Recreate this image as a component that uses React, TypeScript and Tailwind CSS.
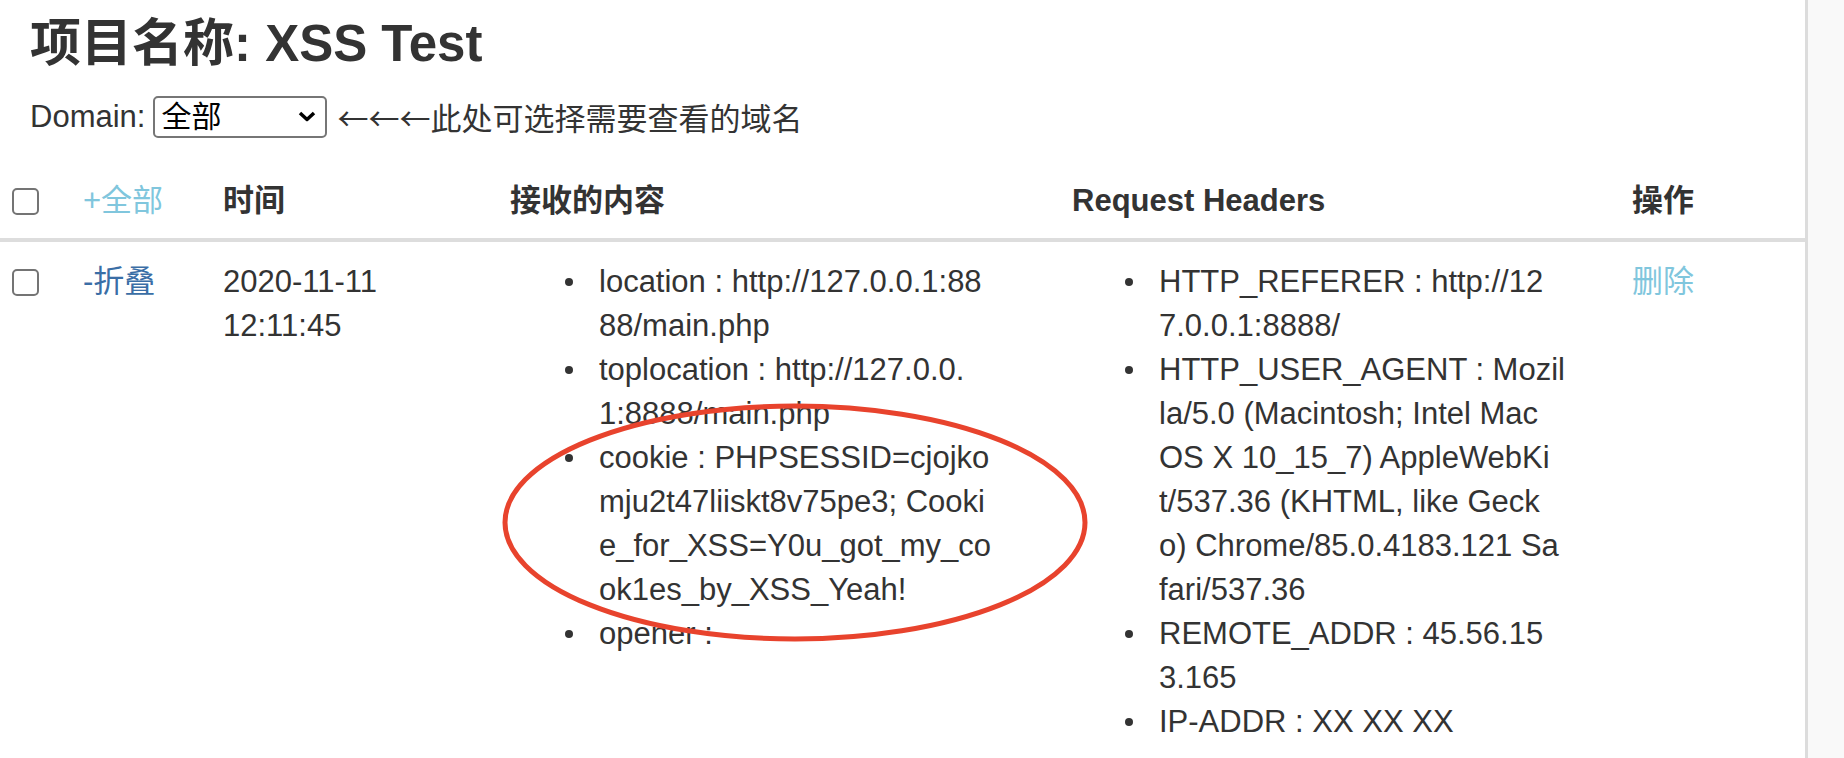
import React from "react";

const contentItems: string[][] = [
  ["location : http://127.0.0.1:88", "88/main.php"],
  ["toplocation : http://127.0.0.", "1:8888/main.php"],
  [
    "cookie : PHPSESSID=cjojko",
    "mju2t47liiskt8v75pe3; Cooki",
    "e_for_XSS=Y0u_got_my_co",
    "ok1es_by_XSS_Yeah!",
  ],
  ["opener :"],
];

const headerItems: string[][] = [
  ["HTTP_REFERER : http://12", "7.0.0.1:8888/"],
  [
    "HTTP_USER_AGENT : Mozil",
    "la/5.0 (Macintosh; Intel Mac",
    "OS X 10_15_7) AppleWebKi",
    "t/537.36 (KHTML, like Geck",
    "o) Chrome/85.0.4183.121 Sa",
    "fari/537.36",
  ],
  ["REMOTE_ADDR : 45.56.15", "3.165"],
  ["IP-ADDR : XX XX XX"],
];

const Box = () => (
  <input
    type="checkbox"
    className="appearance-none w-[27px] h-[27px] border-2 border-[#747474] rounded-[5px] bg-white"
  />
);

const BulletList: React.FC<{ items: string[][]; offset: string }> = ({ items, offset }) => (
  <ul className={offset}>
    {items.map((lines, i) => (
      <li key={i} className="flex">
        <span className="w-[34px] h-[44px] flex items-center shrink-0">
          <span className="w-[8px] h-[8px] rounded-full bg-[#333]" />
        </span>
        <div>
          {lines.map((line, j) => (
            <div key={j} className="whitespace-nowrap">
              {line}
            </div>
          ))}
        </div>
      </li>
    ))}
  </ul>
);

export default function App() {
  const cols = "grid grid-cols-[71px_140px_287px_562px_560px_1fr] pl-[12px]";

  return (
    <div className="relative flex h-[758px] overflow-hidden bg-white text-[#333] font-['Liberation_Sans','Noto_Sans_CJK_SC',sans-serif]">
      <div className="w-[1808px] shrink-0 border-r-[3px] border-[#dcdcdc]">
        <div className="pl-[30px] pt-[15px]">
          <h3 className="text-[51px] leading-[58px] font-bold">项目名称: XSS Test</h3>
          <div className="mt-[22px] h-[44px] flex items-center text-[31px]">
            <span>Domain:</span>
            <div className="relative ml-[8px]">
              <select className="appearance-none w-[174px] h-[42px] border-2 border-[#767676] rounded-[5px] bg-white pl-[6px] text-[30px] leading-[38px] text-black">
                <option>全部</option>
              </select>
              <svg
                className="absolute right-[11px] top-[17px] pointer-events-none"
                width="18"
                height="11"
                viewBox="0 0 18 11"
              >
                <path d="M2 2 L9 8.5 L16 2" fill="none" stroke="#000" strokeWidth="3.5" strokeLinejoin="round" />
              </svg>
            </div>
            <span className="ml-[10px] text-[31px] font-['Noto_Sans_CJK_SC',sans-serif]">
              ←←←此处可选择需要查看的域名
            </span>
          </div>
        </div>

        <div className="mt-[19px] text-[31px] leading-[44px]">
          <div className={`${cols} pt-[21px] pb-[15px] border-b-4 border-[#dddddd] font-bold`}>
            <div className="h-[44px] flex items-center">
              <Box />
            </div>
            <div className="font-normal text-[#80c6dd]">+全部</div>
            <div>时间</div>
            <div>接收的内容</div>
            <div>Request Headers</div>
            <div>操作</div>
          </div>

          <div className={`${cols} pt-[18px]`}>
            <div className="h-[44px] flex items-center">
              <Box />
            </div>
            <div className="text-[#3a6ea6]">-折叠</div>
            <div>
              2020-11-11
              <br />
              12:11:45
            </div>
            <div>
              <BulletList items={contentItems} offset="ml-[55px]" />
            </div>
            <div>
              <BulletList items={headerItems} offset="ml-[53px]" />
            </div>
            <div className="text-[#80c6dd]">删除</div>
          </div>
        </div>
      </div>
      <div className="flex-1 bg-[#f9f9f9]" />

      {/* red hand-drawn mark over the cookie */}
      <svg className="absolute left-[500px] top-[400px] pointer-events-none" width="592" height="246" viewBox="0 0 592 246">
        <ellipse cx="295" cy="122.5" rx="290" ry="116.5" fill="none" stroke="#e8432d" strokeWidth="5" />
      </svg>
    </div>
  );
}
